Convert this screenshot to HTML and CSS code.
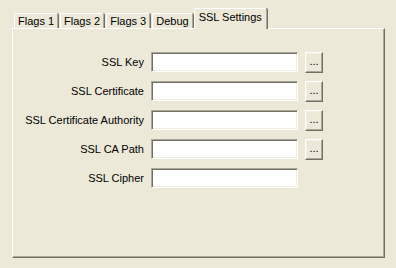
FILE: index.html
```html
<!DOCTYPE html>
<html lang="en">
<head>
    <meta charset="UTF-8">
    <title>SSL Settings</title>
    <link rel="stylesheet" href="styles.css">
</head>
<body>
    <div class="dialog">
        <div class="tabs">
            <div class="tab">Flags 1</div>
            <div class="tab">Flags 2</div>
            <div class="tab">Flags 3</div>
            <div class="tab">Debug</div>
            <div class="tab active">SSL Settings</div>
        </div>

        <div class="panel">
            <div class="row">
                <label class="field-label" for="sslKey">SSL Key</label>
                <input type="text" id="sslKey" class="field">
                <button class="browse">...</button>
            </div>
            <div class="row">
                <label class="field-label" for="sslCert">SSL Certificate</label>
                <input type="text" id="sslCert" class="field">
                <button class="browse">...</button>
            </div>
            <div class="row">
                <label class="field-label" for="sslCa">SSL Certificate Authority</label>
                <input type="text" id="sslCa" class="field">
                <button class="browse">...</button>
            </div>
            <div class="row">
                <label class="field-label" for="sslCaPath">SSL CA Path</label>
                <input type="text" id="sslCaPath" class="field">
                <button class="browse">...</button>
            </div>
            <div class="row">
                <label class="field-label" for="sslCipher">SSL Cipher</label>
                <input type="text" id="sslCipher" class="field">
            </div>
        </div>
    </div>
</body>
</html>
```

FILE: styles.css
```css
body {
    margin: 0;
    background-color: #ece9d8;
    font-family: "Liberation Sans", Arial, sans-serif;
    font-size: 11px;
    color: #000;
}
.dialog {
    padding: 8px 0 0 12px;
}
.tabs {
    display: flex;
    align-items: flex-end;
    height: 20px;
    padding-left: 2px;
    position: relative;
    z-index: 1;
}
.tab {
    box-sizing: border-box;
    height: 15px;
    padding: 0 3px;
    margin-right: 2px;
    line-height: 14px;
    border-top: 1px solid #fff;
    border-left: 1px solid #fff;
    border-right: 1px solid #aca899;
    box-shadow: 1px 0 0 #716f64;
    border-radius: 2px 2px 0 0;
}
.tab.active {
    height: 21px;
    margin-left: -1px;
    margin-bottom: -1px;
    padding: 0 4px;
    line-height: 17px;
    background-color: #ece9d8;
}
.panel {
    box-sizing: border-box;
    width: 373px;
    height: 230px;
    padding: 23px 0 0 0;
    border-top: 1px solid #fff;
    border-left: 1px solid #fff;
    border-right: 1px solid #716f64;
    border-bottom: 1px solid #716f64;
    box-shadow: inset -1px -1px 0 #aca899;
}
.row {
    display: flex;
    align-items: flex-start;
    height: 20px;
    margin-bottom: 9px;
}
.field-label {
    width: 131px;
    line-height: 20px;
    text-align: right;
}
.field {
    box-sizing: border-box;
    width: 147px;
    height: 20px;
    margin: 0 0 0 7px;
    padding: 2px;
    background-color: #fff;
    border-top: 1px solid #aca899;
    border-left: 1px solid #aca899;
    border-right: 1px solid #fff;
    border-bottom: 1px solid #fff;
    box-shadow: inset 1px 1px 0 #716f64, inset -1px -1px 0 #f1efe2;
    outline: none;
}
.browse {
    box-sizing: border-box;
    width: 18px;
    height: 21px;
    margin-left: 7px;
    padding: 0 0 3px 0;
    font-family: inherit;
    font-size: 11px;
    background-color: #ece9d8;
    border-top: 1px solid #fff;
    border-left: 1px solid #fff;
    border-right: 1px solid #716f64;
    border-bottom: 1px solid #716f64;
    box-shadow: inset -1px -1px 0 #aca899, inset 1px 1px 0 #f1efe2;
    line-height: 11px;
}
```
